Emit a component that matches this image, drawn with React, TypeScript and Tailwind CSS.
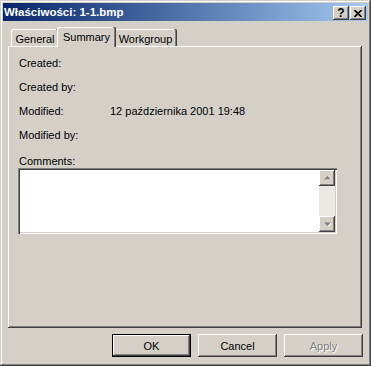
const raised =
  "shadow-[inset_-1px_-1px_#404040,inset_1px_1px_#ffffff,inset_-2px_-2px_#808080,inset_2px_2px_#d4d0c8]";

function TitleButton({ children }: { children: React.ReactNode }) {
  return (
    <div
      className={`w-[16px] h-[14px] bg-[#d4d0c8] flex items-center justify-center ${raised}`}
    >
      {children}
    </div>
  );
}

function Tab({
  label,
  selected,
  w,
}: {
  label: string;
  selected?: boolean;
  w: string;
}) {
  if (selected) {
    return (
      <div
        className={`relative z-10 -mx-[2px] -mb-[1px] h-[20px] ${w} bg-[#d4d0c8] rounded-t-[2px] flex items-start justify-center pt-[3px] shadow-[inset_-1px_0_#404040,inset_-2px_0_#808080,inset_1px_1px_#ffffff]`}
      >
        {label}
      </div>
    );
  }
  return (
    <div
      className={`h-[17px] ${w} bg-[#d4d0c8] rounded-t-[2px] flex items-start justify-center pt-[3px] shadow-[inset_-1px_0_#404040,inset_-2px_0_#808080,inset_1px_1px_#ffffff]`}
    >
      {label}
    </div>
  );
}

function Row({ label, value }: { label: string; value?: string }) {
  return (
    <div className="h-[24px] flex items-center">
      <div className="w-[91px]">{label}</div>
      {value && <div>{value}</div>}
    </div>
  );
}

function Button({
  label,
  isDefault,
  disabled,
}: {
  label: string;
  isDefault?: boolean;
  disabled?: boolean;
}) {
  const shadow = isDefault
    ? "shadow-[inset_0_0_0_1px_#000000,inset_-2px_-2px_#404040,inset_2px_2px_#ffffff,inset_-3px_-3px_#808080]"
    : raised;
  return (
    <div
      className={`w-[79px] h-[23px] bg-[#d4d0c8] flex items-center justify-center ${shadow} ${
        disabled ? "text-[#808080] [text-shadow:1px_1px_#ffffff]" : "text-black"
      }`}
    >
      {label}
    </div>
  );
}

function ScrollArrow({ up }: { up?: boolean }) {
  return (
    <div
      className={`w-[16px] h-[16px] bg-[#d4d0c8] flex items-center justify-center ${raised}`}
    >
      <svg width="7" height="4" viewBox="0 0 7 4">
        {up ? (
          <>
            <path d="M1 4 L4.5 0.5 L8 4 Z" fill="#ffffff" />
            <path d="M0 3.5 L3.5 0 L7 3.5 Z" fill="#808080" />
          </>
        ) : (
          <>
            <path d="M1 1 L4.5 4.5 L8 1 Z" fill="#ffffff" />
            <path d="M0 0.5 L3.5 4 L7 0.5 Z" fill="#808080" />
          </>
        )}
      </svg>
    </div>
  );
}

export default function App() {
  return (
    <div
      className="w-[371px] h-[366px] bg-[#d4d0c8] p-[3px] flex flex-col text-[11px] leading-[14px] text-black shadow-[inset_-1px_-1px_#404040,inset_1px_1px_#d4d0c8,inset_-2px_-2px_#808080,inset_2px_2px_#ffffff]"
      style={{ fontFamily: '"Liberation Sans", Arial, sans-serif' }}
    >
      {/* Title bar */}
      <div className="h-[18px] bg-gradient-to-r from-[#0a246a] to-[#a6caf0] flex items-center justify-between pl-[1px] pr-[2px]">
        <div className="text-white font-bold text-[11.5px] leading-[16px]">
          Właściwości: 1-1.bmp
        </div>
        <div className="flex gap-[1px] mt-[2px]">
          <TitleButton>
            <span className="font-bold text-[12px] leading-[12px] text-black">?</span>
          </TitleButton>
          <TitleButton>
            <svg width="8" height="7" viewBox="0 0 8 7">
              <path
                d="M0.5 0 L7.5 7 M7.5 0 L0.5 7"
                stroke="#000"
                strokeWidth="1.6"
              />
            </svg>
          </TitleButton>
        </div>
      </div>

      {/* Body */}
      <div className="flex flex-col px-[5px] pt-[6px]">
        {/* Tabs */}
        <div className="h-[19px] flex items-end pl-[3px]">
          <Tab label="General" w="w-[48px]" />
          <Tab label="Summary" w="w-[59px]" selected />
          <Tab label="Workgroup" w="w-[63px]" />
        </div>

        {/* Panel */}
        <div className="w-[354px] h-[282px] pt-[5px] pl-[11px] flex flex-col shadow-[inset_-1px_-1px_#404040,inset_1px_1px_#ffffff,inset_-2px_-2px_#808080]">
          <Row label="Created:" />
          <Row label="Created by:" />
          <Row label="Modified:" value="12 października 2001 19:48" />
          <Row label="Modified by:" />
          <div className="mt-[7px] h-[14px]">Comments:</div>
          <div className="-ml-[1px] w-[319px] h-[66px] bg-white flex shadow-[inset_1px_1px_#808080,inset_2px_2px_#404040,inset_-1px_-1px_#ffffff,inset_-2px_-2px_#d4d0c8] p-[2px]">
            <div className="flex-1" />
            <div className="w-[16px] flex flex-col bg-[#ebe9e5]">
              <ScrollArrow up />
              <div className="flex-1" />
              <ScrollArrow />
            </div>
          </div>
        </div>

        {/* Buttons */}
        <div className="mt-[6px] flex justify-end gap-[7px]">
          <Button label="OK" isDefault />
          <Button label="Cancel" />
          <Button label="Apply" disabled />
        </div>
      </div>
    </div>
  );
}
